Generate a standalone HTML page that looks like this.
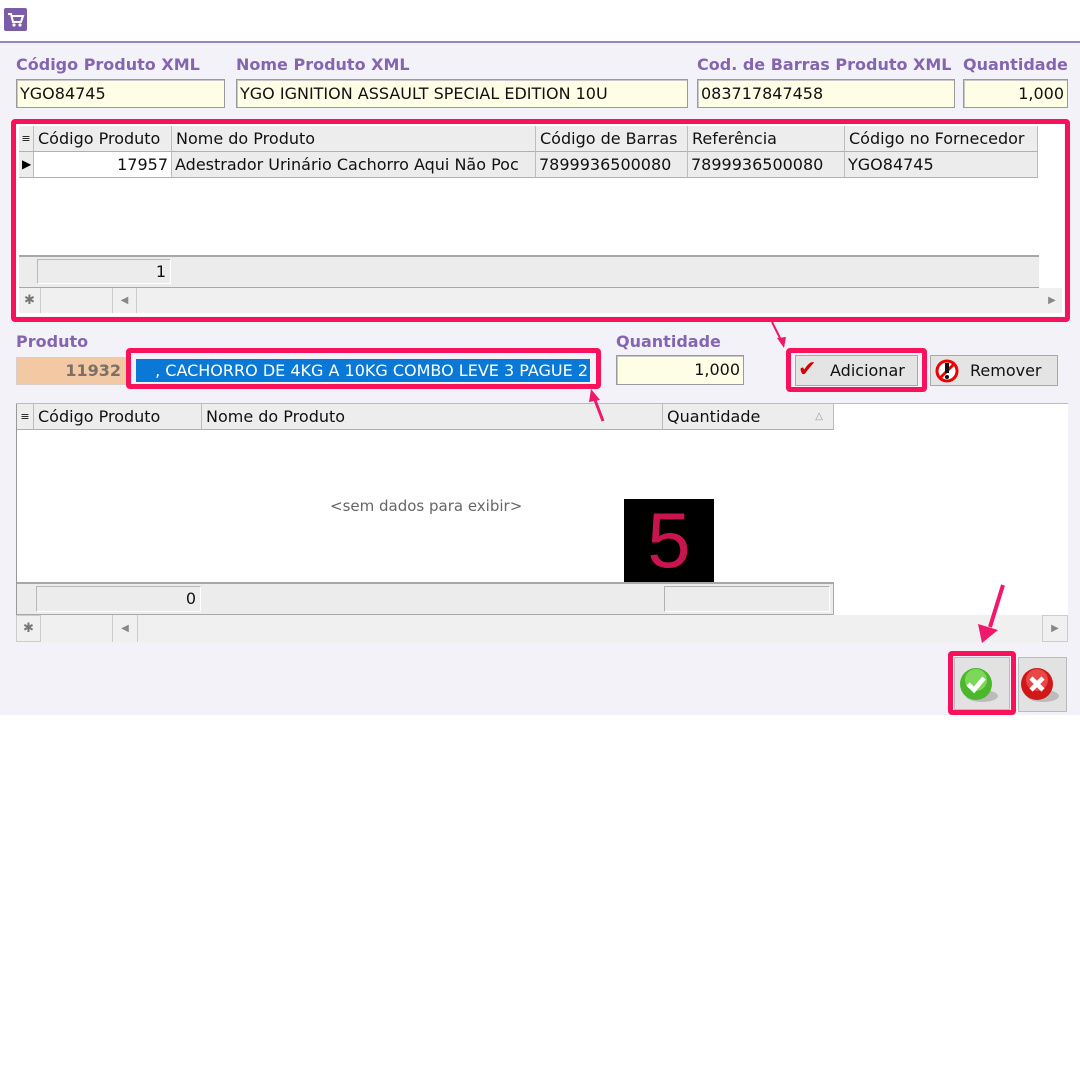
<!DOCTYPE html>
<html><head><meta charset="utf-8">
<style>
*{box-sizing:border-box;margin:0;padding:0}
body{width:1080px;height:1080px;background:#fff;position:relative;font-family:"DejaVu Sans","Liberation Sans",sans-serif;font-size:16px;color:#111;overflow:hidden}
.a{position:absolute}
.lbl{position:absolute;color:#8466b0;font-weight:bold;font-size:16px;white-space:nowrap}
.inp{position:absolute;background:#fefde6;border:1px solid #9a9a9a;box-shadow:inset 1px 1px 0 #c8c8c8;height:29px;line-height:27px;padding:0 3px;white-space:nowrap;overflow:hidden;font-size:16px}
.red{position:absolute;border:5px solid #f7125a;border-radius:4px}
.hd{position:absolute;background:#ededed;border-right:1px solid #bdbdbd;border-bottom:1px solid #b0b0b0;height:26px;line-height:26px;padding-left:4px;white-space:nowrap;overflow:hidden;font-size:16px}
.cl{position:absolute;background:#ececec;border-right:1px solid #bdbdbd;border-bottom:1px solid #b0b0b0;height:26px;line-height:25px;padding:0 3px;white-space:nowrap;overflow:hidden;font-size:16px}
.btn{position:absolute;background:#e4e4e4;border:1px solid #a8a8a8;height:31px;line-height:29px;font-size:16px}
</style></head><body>
<div class="a" style="left:0;top:0;width:1080px;height:715px;background:#f3f2f8"></div>
<div class="a" style="left:0;top:0;width:1080px;height:42px;background:#fff"></div>
<div class="a" style="left:0;top:41px;width:1080px;height:2px;background:#9a85c2"></div>
<svg class="a" style="left:4px;top:8px" width="23" height="23" viewBox="0 0 23 23"><rect width="23" height="23" rx="2" fill="#7a5ca8"/><path d="M4 6h3l2 8h8l2-6H8" fill="none" stroke="#fff" stroke-width="2"/><circle cx="10" cy="17" r="1.6" fill="#fff"/><circle cx="16" cy="17" r="1.6" fill="#fff"/></svg>

<div class="lbl" style="left:16px;top:55px">Código Produto XML</div>
<div class="lbl" style="left:236px;top:55px">Nome Produto XML</div>
<div class="lbl" style="left:697px;top:55px">Cod. de Barras Produto XML</div>
<div class="lbl" style="left:963px;top:55px">Quantidade</div>
<div class="inp" style="left:16px;top:79px;width:209px">YGO84745</div>
<div class="inp" style="left:236px;top:79px;width:452px">YGO IGNITION ASSAULT SPECIAL EDITION 10U</div>
<div class="inp" style="left:697px;top:79px;width:258px">083717847458</div>
<div class="inp" style="left:963px;top:79px;width:105px;text-align:right">1,000</div>

<!-- grid 1 -->
<div class="a" style="left:16px;top:124px;width:1048px;height:192px;background:#fff"></div>
<div class="hd" style="left:19px;top:126px;width:15px;padding:0;text-align:center;font-size:11px">&#8801;</div>
<div class="hd" style="left:34px;top:126px;width:138px">Código Produto</div>
<div class="hd" style="left:172px;top:126px;width:364px">Nome do Produto</div>
<div class="hd" style="left:536px;top:126px;width:152px">Código de Barras</div>
<div class="hd" style="left:688px;top:126px;width:157px">Referência</div>
<div class="hd" style="left:845px;top:126px;width:193px">Código no Fornecedor</div>
<div class="cl" style="left:19px;top:152px;width:15px;padding:0 0 0 3px;font-size:12px;color:#000">&#9654;</div>
<div class="cl" style="left:34px;top:152px;width:138px;background:#fff;text-align:right">17957</div>
<div class="cl" style="left:172px;top:152px;width:364px">Adestrador Urinário Cachorro Aqui Não Poc</div>
<div class="cl" style="left:536px;top:152px;width:152px">7899936500080</div>
<div class="cl" style="left:688px;top:152px;width:157px">7899936500080</div>
<div class="cl" style="left:845px;top:152px;width:193px">YGO84745</div>
<div class="a" style="left:19px;top:255px;width:1020px;height:33px;background:#ececec;border-top:2px solid #a8a8a8;border-bottom:1px solid #a8a8a8"></div>
<div class="a" style="left:37px;top:259px;width:134px;height:25px;background:#ececec;border:1px solid #b8b8b8;border-right-color:#fff;border-bottom-color:#fff;text-align:right;padding-right:4px;line-height:23px;font-size:16px">1</div>
<div class="a" style="left:19px;top:288px;width:1043px;height:25px;background:#f0f0f0"></div>
<div class="a" style="left:19px;top:288px;width:22px;height:25px;border-right:1px solid #ccc;color:#777;font-size:13px;line-height:25px;text-align:center">&#10033;</div>
<div class="a" style="left:112px;top:288px;width:25px;height:25px;border-left:1px solid #ccc;border-right:1px solid #ccc;color:#888;font-size:10px;line-height:25px;text-align:center">&#9664;</div>
<div class="a" style="left:1042px;top:288px;width:20px;height:25px;color:#888;font-size:10px;line-height:25px;text-align:center">&#9654;</div>
<div class="red" style="left:11px;top:119px;width:1059px;height:203px"></div>

<!-- produto -->
<div class="lbl" style="left:16px;top:332px">Produto</div>
<div class="a" style="left:16px;top:357px;width:110px;height:28px;background:#f2c9a2;border:1px solid #d8d0c8;text-align:right;padding-right:4px;line-height:26px;font-weight:bold;color:#7a7068;font-size:16px">11932</div>
<div class="a" style="left:136px;top:359px;width:454px;height:23px;background:#0a78d6;color:#fff;line-height:23px;overflow:hidden;font-size:16px"><span style="position:absolute;right:2px;top:0;white-space:nowrap">, CACHORRO DE 4KG A 10KG COMBO LEVE 3 PAGUE 2</span></div>
<div class="red" style="left:126px;top:348px;width:475px;height:41px"></div>

<div class="lbl" style="left:616px;top:332px">Quantidade</div>
<div class="inp" style="left:616px;top:355px;width:128px;height:30px;text-align:right">1,000</div>

<div class="btn" style="left:795px;top:355px;width:123px"><span style="position:absolute;left:2px;top:-1px;color:#d40000;font-size:22px;font-weight:bold">&#10004;</span><span style="position:absolute;left:34px">Adicionar</span></div>
<div class="red" style="left:786px;top:348px;width:141px;height:44px"></div>
<div class="btn" style="left:930px;top:355px;width:128px"><svg style="position:absolute;left:4px;top:3px" width="24" height="24" viewBox="0 0 24 24"><circle cx="12" cy="12" r="10" fill="#fff" stroke="#e00" stroke-width="3"/><line x1="5" y1="19" x2="19" y2="5" stroke="#e00" stroke-width="3"/><rect x="10" y="4" width="4" height="10" fill="#111"/><circle cx="12" cy="18" r="2" fill="#111"/></svg><span style="position:absolute;left:39px">Remover</span></div>

<!-- grid 2 -->
<div class="a" style="left:16px;top:403px;width:1052px;height:212px;background:#fff;border-top:1px solid #bbb"></div>
<div class="hd" style="left:17px;top:404px;width:17px;padding:0;text-align:center;font-size:11px">&#8801;</div>
<div class="hd" style="left:34px;top:404px;width:168px">Código Produto</div>
<div class="hd" style="left:202px;top:404px;width:461px">Nome do Produto</div>
<div class="hd" style="left:663px;top:404px;width:171px">Quantidade<span style="position:absolute;right:10px;color:#999;font-size:10px">&#9651;</span></div>
<div class="a" style="left:16px;top:404px;width:1px;height:211px;background:#999"></div>
<div class="a" style="left:330px;top:497px;color:#666;font-size:15px">&lt;sem dados para exibir&gt;</div>
<div class="a" style="left:17px;top:582px;width:817px;height:33px;background:#ececec;border-top:2px solid #a8a8a8;border-bottom:1px solid #a8a8a8;border-right:1px solid #a8a8a8"></div>
<div class="a" style="left:36px;top:586px;width:165px;height:26px;background:#ececec;border:1px solid #b8b8b8;border-right-color:#fff;border-bottom-color:#fff;text-align:right;padding-right:4px;line-height:24px;font-size:16px">0</div>
<div class="a" style="left:664px;top:586px;width:166px;height:26px;border:1px solid #b0b0b0;border-right-color:#fff;border-bottom-color:#fff"></div>
<div class="a" style="left:16px;top:615px;width:1052px;height:27px;background:#f0f0f0"></div>
<div class="a" style="left:16px;top:615px;width:25px;height:27px;border:1px solid #ccc;color:#777;font-size:13px;line-height:25px;text-align:center">&#10033;</div>
<div class="a" style="left:112px;top:615px;width:26px;height:27px;border-left:1px solid #ccc;border-right:1px solid #ccc;color:#888;font-size:10px;line-height:27px;text-align:center">&#9664;</div>
<div class="a" style="left:1042px;top:615px;width:26px;height:27px;border:1px solid #ccc;color:#888;font-size:10px;line-height:25px;text-align:center">&#9654;</div>

<div class="a" style="left:624px;top:499px;width:90px;height:83px;background:#000;color:#c8154f;font-family:'Liberation Sans',sans-serif;font-size:78px;line-height:83px;text-align:center">5</div>

<!-- ok / cancel -->
<div class="a" style="left:954px;top:657px;width:56px;height:53px;background:#e2e2e2;border:1px solid #bbb"></div>
<svg class="a" style="left:958px;top:664px" width="42" height="42" viewBox="0 0 42 42"><ellipse cx="24" cy="32" rx="16" ry="6" fill="#bbb"/><circle cx="18" cy="20" r="16" fill="#4ab82a"/><circle cx="18" cy="16" r="11" fill="#7dd75a"/><path d="M10 20l6 6 10-12" fill="none" stroke="#fff" stroke-width="4.5"/></svg>
<div class="red" style="left:948px;top:651px;width:68px;height:64px"></div>
<div class="a" style="left:1018px;top:657px;width:49px;height:55px;background:#e2e2e2;border:1px solid #bbb"></div>
<svg class="a" style="left:1019px;top:664px" width="46" height="42" viewBox="0 0 46 42"><ellipse cx="24" cy="32" rx="16" ry="6" fill="#bbb"/><circle cx="18" cy="20" r="16" fill="#d01818"/><circle cx="18" cy="16" r="11" fill="#e84848"/><path d="M12 14l12 12M24 14L12 26" stroke="#fff" stroke-width="4.5"/></svg>

<!-- arrows -->
<svg class="a" style="left:0;top:0" width="1080" height="720">
<g stroke="#f0186a" fill="#f0186a">
<line x1="772" y1="322" x2="781" y2="340" stroke-width="2"/><polygon points="777,338 786,337 784,348" stroke="none"/>
<line x1="603" y1="421" x2="595" y2="400" stroke-width="3"/><polygon points="589,402 600,400 591,389" stroke="none"/>
<line x1="1003" y1="585" x2="990" y2="627" stroke-width="4"/><polygon points="978,624 998,630 982,643" stroke="none"/>
</g></svg>
</body></html>
